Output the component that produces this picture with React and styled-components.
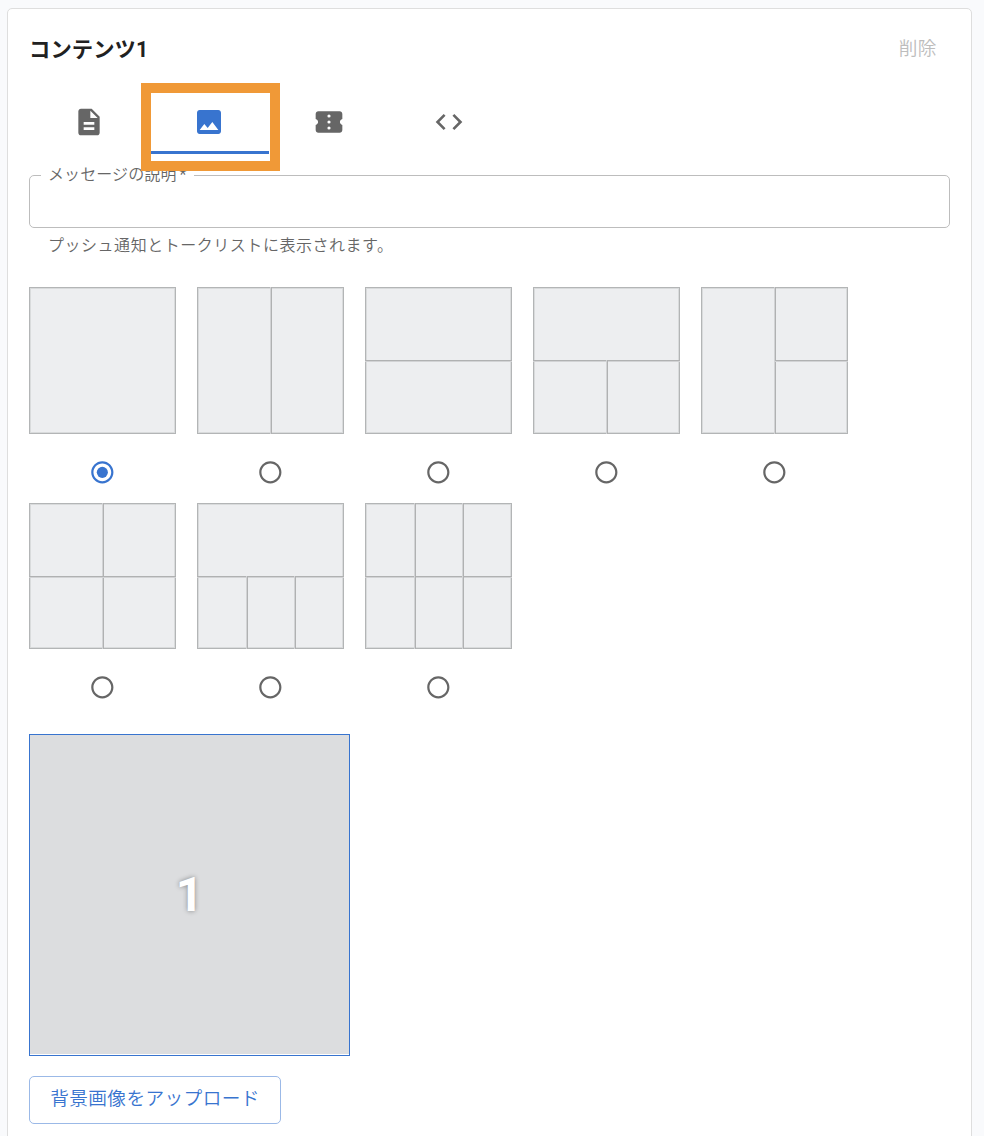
import React, { useState } from "react";
import styled, { createGlobalStyle, css } from "styled-components";

const Global = createGlobalStyle`
  *, *::before, *::after { box-sizing: border-box; }
  body {
    margin: 0;
    background: #f9fafc;
    font-family: Roboto, "Noto Sans CJK JP", sans-serif;
    color: #212121;
  }
`;

const Page = styled.main`
  height: 1136px;
  padding: 8px 12px 0 7px;
  overflow: hidden;
`;

const Card = styled.section`
  height: 1160px;
  padding: 20px 21px 0;
  background: #fff;
  border: 1px solid #dedede;
  border-radius: 5px;
`;

const Header = styled.header`
  display: flex;
  align-items: center;
  justify-content: space-between;
  height: 40px;
  padding-right: 13px;
`;

const Title = styled.h2`
  margin: 0;
  padding-top: 2px;
  font-size: 21.33px;
  line-height: 32px;
  font-weight: 700;
  letter-spacing: 0.05px;
`;

const DeleteButton = styled.button`
  padding: 0;
  border: 0;
  background: none;
  color: #bdbdbd;
  font: 350 18.67px/32px Roboto, "Noto Sans CJK JP", sans-serif;
  letter-spacing: 0.53px;
`;

const Tabs = styled.nav`
  display: flex;
  height: 64px;
  margin-top: 21px;
`;

const Tab = styled.button`
  position: relative;
  display: flex;
  align-items: center;
  justify-content: center;
  width: 120px;
  padding: 0;
  border: 0;
  background: none;
  color: ${(p) => (p.$active ? "#3874cf" : "#666")};
  ${(p) =>
    p.$active &&
    css`
      box-shadow: inset 0 -3px 0 #3874cf;
    `}
`;

const Highlight = styled.span`
  position: absolute;
  z-index: 2;
  top: -7px;
  left: -8px;
  width: 139px;
  height: 88px;
  border: 10px solid #f09937;
  pointer-events: none;
`;

const Icon = styled.svg`
  display: block;
  width: ${(p) => p.$size || 32}px;
  height: ${(p) => p.$size || 32}px;
  fill: currentColor;
`;

const Field = styled.fieldset`
  height: 63px;
  min-width: 0;
  margin: 11px 0 0;
  padding: 0 0 0 11px;
  border: 1px solid #bdbdbd;
  border-radius: 5px;
`;

const Legend = styled.legend`
  width: 153px;
  height: 20px;
  padding: 0 0 0 7px;
  color: #666;
  font-size: 16px;
  font-weight: 350;
  line-height: 19px;
  letter-spacing: 0.1px;
  white-space: nowrap;
`;

const Asterisk = styled.span`
  margin-left: 3px;
  font-weight: 400;
`;

const Helper = styled.p`
  margin: 6px 0 0 19px;
  color: #666;
  font-size: 16px;
  font-weight: 350;
  line-height: 24px;
  letter-spacing: 0.53px;
`;

const Layouts = styled.div`
  display: grid;
  grid-template-columns: repeat(5, 147px);
  grid-template-rows: 216px 215px;
  column-gap: 21px;
  margin-top: 29px;
`;

const LayoutOption = styled.label`
  display: flex;
  flex-direction: column;
  align-items: center;
  color: ${(p) => (p.$checked ? "#3874cf" : "#666")};
`;

const Thumb = styled.svg`
  display: block;
  width: 147px;
  height: ${(p) => p.$height}px;
  margin-bottom: 25px;
  shape-rendering: crispEdges;
`;

const Preview = styled.div`
  display: flex;
  align-items: center;
  justify-content: center;
  width: 321px;
  height: 322px;
  margin-top: 16px;
  background: #dcdddf;
  border: 1px solid #3874cf;
  box-shadow: inset 0 -1px 0 #fff;
  color: #fff;
  font-size: 48px;
  font-weight: 700;
  line-height: 1;
  text-shadow: 0 0 5px rgba(0, 0, 0, 0.4);
`;

const UploadButton = styled.button`
  display: block;
  width: 252px;
  height: 48px;
  margin-top: 20px;
  padding: 0 0 2px;
  border: 1px solid #9bb9e7;
  border-radius: 5px;
  background: #fff;
  color: #3874cf;
  font: 350 18.67px/32px Roboto, "Noto Sans CJK JP", sans-serif;
  letter-spacing: 0.4px;
`;

const tabIcons = [
  "M14 2H6c-1.1 0-1.99.9-1.99 2L4 20c0 1.1.89 2 1.99 2H18c1.1 0 2-.9 2-2V8l-6-6zm2 16H8v-2h8v2zm0-4H8v-2h8v2zm-3-5V3.5L18.5 9H13z",
  "M21 19V5c0-1.1-.9-2-2-2H5c-1.1 0-2 .9-2 2v14c0 1.1.9 2 2 2h14c1.1 0 2-.9 2-2zM8.5 13.5l2.5 3.01L14.5 12l4.5 6H5l3.5-4.5z",
  "M22 9.8V6c0-1.1-.9-2-2-2H4c-1.1 0-2 .9-2 2v3.8c1 .3 1.8 1.2 1.8 2.2s-.8 1.9-1.8 2.2V18c0 1.100.9 2 2 2h16c1.100 0 2-.9 2-2v-3.800c-1-.3-1.800-1.200-1.800-2.200s.8-1.900 1.800-2.200zM12 15.300a1.200 1.200 0 1 1 0 2.400 1.200 1.200 0 0 1 0-2.400zM12 10.800a1.200 1.200 0 1 1 0 2.400 1.200 1.200 0 0 1 0-2.400zM12 6.300a1.200 1.200 0 1 1 0 2.400 1.200 1.200 0 0 1 0-2.400z",
  "M9.4 16.6L4.8 12l4.6-4.6L8 6l-6 6 6 6 1.4-1.4zm5.2 0l4.6-4.6-4.6-4.6L16 6l6 6-6 6-1.4-1.4z",
];

// Divider lines of each layout: [x1, y1, x2, y2]
const layouts = [
  [],
  [[74, 0, 74, 147]],
  [[0, 73, 147, 73]],
  [[0, 73, 147, 73], [74, 73, 74, 147]],
  [[74, 0, 74, 147], [74, 73, 147, 73]],
  [[74, 0, 74, 147], [0, 73, 147, 73]],
  [[0, 73, 147, 73], [50, 73, 50, 147], [98, 73, 98, 147]],
  [[0, 73, 147, 73], [50, 0, 50, 147], [98, 0, 98, 147]],
];

function Layout({ lines, height, checked, onSelect }) {
  return (
    <LayoutOption $checked={checked} onClick={onSelect}>
      <Thumb $height={height} viewBox={`0 0 147 ${height}`}>
        <rect width="147" height={height} fill="#b3b5b6" />
        <rect x="1" y="1" width="145" height={height - 2} fill="#d9dbdc" />
        <rect x="2" y="2" width="143" height={height - 4} fill="#edeef0" />
        {lines.map(([x1, y1, x2, y2], i) => {
          const vertical = x1 === x2;
          return (
            <g key={i}>
              <rect
                x={vertical ? x1 - 1 : x1}
                y={vertical ? y1 : y1 + 1}
                width={vertical ? 1 : x2 - x1}
                height={vertical ? y2 - y1 : 1}
                fill="#d2d3d5"
              />
              <rect
                x={x1}
                y={y1}
                width={vertical ? 1 : x2 - x1}
                height={vertical ? y2 - y1 : 1}
                fill="#b0b1b2"
              />
            </g>
          );
        })}
      </Thumb>
      <Icon $size={26.67} viewBox="0 0 24 24">
        <path d="M12 2C6.48 2 2 6.48 2 12s4.48 10 10 10 10-4.48 10-10S17.52 2 12 2zm0 18c-4.42 0-8-3.58-8-8s3.58-8 8-8 8 3.58 8 8-3.58 8-8 8z" />
        {checked && <circle cx="12" cy="12" r="5" />}
      </Icon>
    </LayoutOption>
  );
}

export default function App() {
  const [tab, setTab] = useState(1);
  const [layout, setLayout] = useState(0);
  return (
    <Page>
      <Global />
      <Card>
        <Header>
          <Title>コンテンツ1</Title>
          <DeleteButton>削除</DeleteButton>
        </Header>
        <Tabs>
          {tabIcons.map((d, i) => (
            <Tab key={i} $active={i === tab} onClick={() => setTab(i)}>
              <Icon viewBox="0 0 24 24">
                <path d={d} fillRule="evenodd" />
              </Icon>
              {i === 1 && <Highlight />}
            </Tab>
          ))}
        </Tabs>
        <Field>
          <Legend>
            メッセージの説明<Asterisk>*</Asterisk>
          </Legend>
        </Field>
        <Helper>プッシュ通知とトークリストに表示されます。</Helper>
        <Layouts>
          {layouts.map((lines, i) => (
            <Layout
              key={i}
              lines={lines}
              height={i < 5 ? 147 : 146}
              checked={i === layout}
              onSelect={() => setLayout(i)}
            />
          ))}
        </Layouts>
        <Preview>1</Preview>
        <UploadButton>背景画像をアップロード</UploadButton>
      </Card>
    </Page>
  );
}
